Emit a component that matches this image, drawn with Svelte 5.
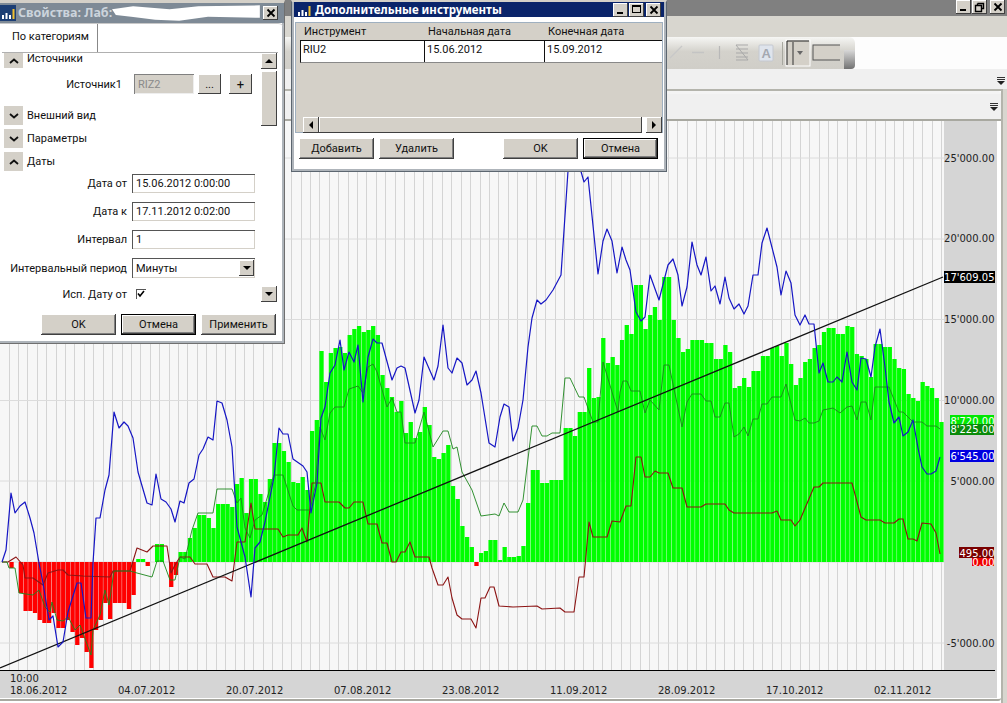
<script>
  const tops = [562,562,568,562,593,611,611,613,620,623,623,613,628,628,620,632,645,638,652,668,630,620,603,619,603,603,603,609,595,559,559,566,562,544,544,562,587,575,
    552,552,538,528,515,515,518,528,504,504,504,507,484,478,513,479,479,494,502,479,443,443,451,462,482,483,
    477,490,431,420,351,382,353,348,347,353,335,329,326,332,330,326,335,375,388,397,412,401,433,422,438,432,407,425,457,459,453,445,486,499,526,537,547,566,553,551,540,540,560,547,557,557,556,546,503,470,470,483,483,480,480,480,428,428,436,412,412,368,398,397,338,363,357,365,340,
    325,334,285,285,329,315,307,320,277,277,320,338,352,349,340,340,340,343,343,359,359,345,352,388,386,378,387,371,371,356,356,348,346,356,343,364,385,378,362,359,348,345,332,328,328,334,334,326,327,354,356,359,377,344,344,347,347,359,368,369,394,398,401,382,386,388,398,422];
  const p = 944 / tops.length;
  const bars = tops.map((y, k) => ({
    x: k * p,
    y: y < 562 ? y : 562,
    h: Math.abs(562 - y),
    fill: y < 562 ? '#00ff00' : '#ff0000'
  })).filter((b) => b.h > 0);
  const vgrid = Array.from({ length: 100 }, (_, i) => Math.round(8.5 + i * 9.42) + 0.5);
  const hgrid = [158, 239, 319.5, 400.5, 481, 562, 643];
  const labels = [["25'000.00",162],["20'000.00",242],["15'000.00",323],["10'000.00",404],["5'000.00",485],["-5'000.00",647]];
  const dates = [['18.06.2012',10],['04.07.2012',118],['20.07.2012',226],['07.08.2012',334],['23.08.2012',442],['11.09.2012',550],['28.09.2012',658],['17.10.2012',766],['02.11.2012',874]];
  const tags = [
    ["8'720.00", 950, 415, 44, 10, '#00e800', 425],
    ["8'225.00", 950, 424, 44, 11, '#0a8a0a', 433],
    ["6'545.00", 950, 450, 44, 12, '#0000e0', 460],
    ['0.00', 972, 556, 22, 10, '#f00000', 566],
    ['495.00', 959, 547, 35, 11, '#7a0000', 557],
    ["17'609.05", 944, 271, 51, 12, '#000000', 281]
  ];
  const blue = "2,562 6,550 11,493 15,513 20,506 25,502 30,518 34,533 39,563 43,583 49,620 53,616 58,647 63,642 68,612 77,583 81,583 86,618 91,618 93,563 96,518 100,518 105,490 109,475 114,412 119,428 124,422 128,426 133,438 138,472 147,503 152,505 156,474 161,499 166,502 171,509 175,522 180,501 184,503 189,483 194,479 199,455 203,449 208,437 213,440 217,401 222,403 227,420 232,447 237,527 245,557 251,597 255,548 260,542 265,522 274,477 279,428 283,434 288,434 293,459 303,466 307,472 311,513 317,483 321,418 325,407 330,373 335,365 340,340 344,370 349,352 354,362 358,345 363,402 368,357 373,339 377,343 382,343 392,380 397,368 401,366 405,368 415,413 419,400 424,357 434,380 438,366 443,325 448,368 452,373 457,358 462,363 467,385 472,380 476,371 481,393 489,443 495,447 500,417 504,404 509,407 513,441 518,428 523,400 528,347 532,318 537,300 541,304 546,300 553,290 561,275 568,171 580,168 584,182 588,177 598,274 603,241 607,229 612,241 617,273 622,247 626,260 630,270 636,312 641,321 645,317 650,275 659,300 668,265 673,259 678,275 682,306 687,287 692,242 697,265 701,275 706,257 711,291 715,286 720,304 725,277 729,298 734,309 739,304 744,314 748,306 753,275 758,275 762,243 767,228 777,267 781,295 786,271 791,283 795,315 800,325 805,315 809,324 814,324 819,373 823,363 828,382 833,382 837,377 842,382 847,352 852,382 857,390 861,358 866,359 871,377 875,347 880,329 885,367 889,402 894,423 899,417 903,436 908,432 913,420 918,448 922,467 927,474 931,474 936,471 940,457";
  const green = "2,562 7,562 9,568 15,568 19,593 33,595 39,590 45,607 50,612 52,602 57,620 63,621 68,617 75,630 80,625 91,655 93,630 100,615 105,590 109,605 114,571 130,571 137,573 152,577 157,561 163,561 170,580 175,580 180,557 185,559 192,530 198,513 213,513 217,489 232,489 237,503 241,498 245,528 250,538 255,520 262,515 274,475 283,475 293,506 297,510 310,510 315,487 320,427 325,440 330,413 335,407 344,407 349,389 358,386 363,393 368,367 373,364 377,372 387,407 392,398 397,412 401,412 405,443 415,443 424,412 433,447 443,431 448,431 453,449 457,447 462,472 472,490 481,516 495,514 499,516 504,503 509,512 518,512 523,500 532,426 537,426 542,436 547,436 552,433 560,433 565,378 570,378 579,397 584,397 593,422 598,422 603,362 618,412 620,392 623,381 627,381 631,391 640,391 645,413 650,400 659,410 664,365 669,365 682,427 687,402 692,394 701,394 706,401 711,401 715,417 720,417 725,403 729,403 734,437 739,434 744,427 748,436 753,419 758,419 762,404 767,404 772,397 781,397 786,384 795,420 800,421 805,418 809,423 814,423 819,421 823,410 833,408 840,413 847,407 852,406 857,420 861,402 866,402 871,420 875,387 889,387 899,412 903,412 913,422 922,422 927,426 936,426 940,429";
  const red = "2,562 8,562 16,557 23,565 25,578 33,578 43,585 48,573 58,570 63,570 68,575 83,576 110,577 113,571 130,571 137,548 147,552 153,546 167,546 171,573 175,565 180,557 190,557 195,564 207,564 213,577 225,577 232,581 237,542 245,542 251,503 255,529 278,529 283,537 288,535 298,535 302,528 307,542 312,483 321,483 325,502 339,502 345,508 349,508 354,502 363,502 368,524 377,524 382,543 387,543 392,562 396,562 401,552 405,552 410,542 415,557 429,557 432,568 438,585 443,585 448,577 452,598 457,615 462,619 471,619 476,628 481,598 485,598 490,587 494,587 499,606 513,607 537,606 542,609 560,608 565,612 574,612 579,577 584,577 589,522 593,537 607,537 612,521 620,522 626,506 631,506 636,457 641,457 645,477 650,477 655,471 659,473 668,473 673,488 682,488 687,507 701,507 706,504 725,504 729,510 734,513 772,513 777,511 781,520 791,520 795,526 800,520 814,487 819,487 823,483 852,483 861,517 866,520 880,520 885,523 894,523 899,519 903,519 908,539 913,539 917,541 922,523 931,524 936,533 940,554";
</script>

<div class="app">
  <div class="titlebar">
    <div class="capbtns">
      <span class="capbtn"><i class="min"></i></span>
      <span class="capbtn"><svg width="11" height="11" viewBox="0 0 11 11"><path d="M3.5 1.5h6v5h-2M3.5 1.5v2M1.5 3.5h6v6h-6z" fill="none" stroke="#000" stroke-width="1.4"/></svg></span>
      <span class="capbtn close"><svg width="10" height="10" viewBox="0 0 10 10"><path d="M1.5 1.5l7 7M8.5 1.5l-7 7" stroke="#000" stroke-width="1.8"/></svg></span>
    </div>
  </div>
  <div class="menubar"></div>
  <div class="toolbar">
    <div class="tools">
      <svg class="tool-icons" width="180" height="32" viewBox="0 0 180 32">
        <path d="M10 21L22 9" stroke="#c8c8c8" stroke-width="1.2"/>
        <path d="M32 15.5H44" stroke="#c4c4c4" stroke-width="1.4"/>
        <path d="M59.5 9V22" stroke="#b8b8b8" stroke-width="1.2"/>
        <path d="M76 8H88M76 12H88M76 16H88M76 20H88M76 23H88M76 8L88 23" stroke="#a9a9a9" stroke-width="1"/>
        <rect x="99" y="8" width="14" height="16" rx="1" fill="#dfe4ec" stroke="#c4c8d0"/>
        <text x="101.5" y="21" class="icon-a">A</text>
        <path d="M122.5 5V28" stroke="#a8a8a0"/>
        <rect x="126" y="3" width="24" height="26" fill="#d4d0c8" stroke="#fff"/>
        <path d="M127 4h22M127 4v24" stroke="#222"/>
        <path d="M133 5v23" stroke="#333"/>
        <path d="M137 14h6l-3 4z" fill="#666"/>
        <rect x="153" y="8" width="28" height="15" fill="#d4d0c8" stroke="#555"/>
      </svg>
      <span class="launcher"></span>
    </div>
  </div>
  <div class="strip one"><span class="chev"></span></div>
  <div class="inner">
    <div class="strip two"><span class="chev"></span></div>
    <div class="frame">
      <svg class="chart" width="997" height="577" viewBox="0 121 997 577">
        <rect x="0" y="121" width="944" height="550" fill="#f7f7f7"/>
        <rect x="944" y="121" width="53" height="577" fill="#d5d5d5"/>
        <rect x="0" y="671" width="997" height="27" fill="#d5d5d5"/>
        {#each vgrid as x}
          <line x1={x} x2={x} y1="121" y2="670" class="vg"/>
        {/each}
        {#each hgrid as y}
          <line x1="0" x2="944" y1={y} y2={y} class="hg"/>
        {/each}
        {#each bars as b}
          <rect x={b.x} y={b.y} width={p - 0.4} height={b.h} fill={b.fill}/>
        {/each}
        <polyline points={red} class="ln redl"/>
        <polyline points={green} class="ln greenl"/>
        <line x1="0" y1="668" x2="943" y2="277" class="trend"/>
        <polyline points={blue} class="ln bluel"/>
        <line x1="0" x2="995" y1="670.5" y2="670.5" stroke="#000"/>
        {#each labels as l}
          <text x="994.5" y={l[1]} text-anchor="end" class="ax">{l[0]}</text>
        {/each}
        {#each tags as t}
          <rect x={t[1]} y={t[2]} width={t[3]} height={t[4]} fill={t[5]}/>
          <text x="994.5" y={t[6]} text-anchor="end" class="tag">{t[0]}</text>
        {/each}
        <text x="10" y="682" class="ax">10:00</text>
        {#each dates as d}
          <text x={d[1]} y="693.5" class="ax">{d[0]}</text>
        {/each}
      </svg>
    </div>
  </div>

  <section class="dlg props">
    <header class="cap inactive">
      <svg class="appicon" width="16" height="16" viewBox="0 0 16 16"><rect width="16" height="16" fill="#1d3f74"/><path d="M2 10h2v4H2zM5.5 8h2v6h-2zM9 10h2v4H9z" fill="#fff"/><path d="M12.5 4h2v10h-2z" fill="#f0c030"/></svg>
      <span class="captext">Свойства: Лаб:</span>
      <svg class="blob" width="152" height="18" viewBox="0 0 154 18"><path d="M0 5L22 2 60 5 90 2 154 1 154 14 100 13 70 17 45 16 20 13 4 11z" fill="#fff"/></svg>
      <span class="capbtn close"><svg width="10" height="10" viewBox="0 0 10 10"><path d="M1.5 1.5l7 7M8.5 1.5l-7 7" stroke="#000" stroke-width="1.8"/></svg></span>
    </header>
    <div class="tabs"><span class="tab">По категориям</span></div>
    <div class="panel">
      <div class="plist">
        <div class="sec first"><span class="tog"><svg width="10" height="6" viewBox="0 0 10 6"><path d="M1 5l4-3.5L9 5" fill="none" stroke="#111" stroke-width="1.8"/></svg></span>Источники</div>
        <div class="row src">
          <label>Источник1</label>
          <span class="field dis">RIZ2</span>
          <span class="mini">...</span>
          <span class="mini plus">+</span>
        </div>
        <div class="sec s1"><span class="tog"><svg width="10" height="6" viewBox="0 0 10 6"><path d="M1 1l4 3.5L9 1" fill="none" stroke="#111" stroke-width="1.8"/></svg></span>Внешний вид</div>
        <div class="sec"><span class="tog"><svg width="10" height="6" viewBox="0 0 10 6"><path d="M1 1l4 3.5L9 1" fill="none" stroke="#111" stroke-width="1.8"/></svg></span>Параметры</div>
        <div class="sec"><span class="tog"><svg width="10" height="6" viewBox="0 0 10 6"><path d="M1 5l4-3.5L9 5" fill="none" stroke="#111" stroke-width="1.8"/></svg></span>Даты</div>
        <div class="row r1"><label>Дата от</label><span class="field wide">15.06.2012 0:00:00</span></div>
        <div class="row r2"><label>Дата к</label><span class="field wide">17.11.2012 0:02:00</span></div>
        <div class="row r3"><label>Интервал</label><span class="field wide">1</span></div>
        <div class="row r4"><label>Интервальный период</label><span class="field wide combo">Минуты<span class="drop"><i class="tri"></i></span></span></div>
        <div class="row r5"><label>Исп. Дату от</label><span class="check"><svg width="8" height="8" viewBox="0 0 8 8"><path d="M1 3.5l2 2.5L7 1" fill="none" stroke="#000" stroke-width="1.6"/></svg></span></div>
      </div>
      <div class="vscroll">
        <span class="sbtn"><i class="tri up"></i></span>
        <span class="thumb"></span>
        <span class="track"></span>
        <span class="sbtn"><i class="tri"></i></span>
      </div>
    </div>
    <footer class="foot f1">
      <button class="btn">OK</button>
      <button class="btn def">Отмена</button>
      <button class="btn">Применить</button>
    </footer>
  </section>

  <section class="dlg tools-dlg">
    <header class="cap active">
      <svg class="appicon small" width="16" height="14" viewBox="0 0 16 14"><path d="M2 9h2v4H2zM5.5 7h2v6h-2zM9 9h2v4H9z" fill="#fff"/><path d="M12.5 3h2v10h-2z" fill="#f0c030"/></svg>
      <span class="captext">Дополнительные инструменты</span>
      <span class="capbtn wbtn"><i class="min"></i></span>
      <span class="capbtn wbtn"><i class="max"></i></span>
      <span class="capbtn wbtn close"><svg width="10" height="10" viewBox="0 0 10 10"><path d="M1.5 1.5l7 7M8.5 1.5l-7 7" stroke="#000" stroke-width="1.8"/></svg></span>
    </header>
    <div class="gridpanel">
      <div class="ghead"><span>Инструмент</span><span>Начальная дата</span><span>Конечная дата</span></div>
      <div class="grow"><span>RIU2</span><span>15.06.2012</span><span>15.09.2012</span></div>
      <div class="gspace"></div>
      <div class="hscroll">
        <span class="sbtn"><i class="tri left"></i></span>
        <span class="hthumb"></span>
        <span class="sbtn"><i class="tri right"></i></span>
      </div>
    </div>
    <footer class="foot f2">
      <button class="btn">Добавить</button>
      <button class="btn">Удалить</button>
      <span class="spacer"></span>
      <button class="btn">OK</button>
      <button class="btn def">Отмена</button>
    </footer>
  </section>
</div>

<style>
  :global(body) { margin: 0; background: #fff; }
  .app { position: relative; width: 1007px; height: 703px; overflow: hidden; display: flex; flex-direction: column; background: #d8d6cf; font-family: Roboto, "Noto Sans", sans-serif; font-size: 11px; color: #111; }
  .titlebar { height: 16px; background: #808080; display: flex; justify-content: flex-end; padding-right: 2px; flex: none; }
  .capbtns { display: flex; }
  .capbtn { width: 15px; height: 14px; box-sizing: border-box; background: #d4d0c8; box-shadow: inset -1px -1px #404040, inset 1px 1px #fff; display: flex; align-items: center; justify-content: center; margin-left: 1px; position: relative; flex: none; }
  .capbtn.close { margin-left: 3px; }
  .min { position: absolute; left: 4px; bottom: 3px; width: 6px; height: 2px; background: #000; }
  .max { position: absolute; left: 3px; top: 2px; width: 9px; height: 8px; box-sizing: border-box; border: 1px solid #000; border-top-width: 2px; }
  .menubar { height: 21px; flex: none; background: #d8d6cf; }
  .toolbar { height: 32px; flex: none; background: #fdfdfd; display: flex; }
  .tools { width: 855px; flex: none; background: linear-gradient(#f6f6f4, #d4d2cc 45%, #d0cec8); border-radius: 0 6px 6px 0; position: relative; display: flex; justify-content: flex-end; }
  .tool-icons { margin-right: 15px; }
  .icon-a { font: 700 13px "Liberation Sans", sans-serif; fill: #a4a8b0; }
  .launcher { position: absolute; right: 0; bottom: 0; width: 11px; height: 19px; background: linear-gradient(#d8d8d8, #727272); border-radius: 0 0 4px 0; }
  .strip { background: #f0f0f0; display: flex; justify-content: flex-end; align-items: center; flex: none; }
  .strip.one { height: 20px; padding: 3px 2px 0 0; box-sizing: border-box; }
  .strip.two { height: 28px; padding-right: 3px; border-top: 3px solid #f4f4f4; box-sizing: border-box; border-radius: 3px 3px 0 0; }
  .chev { width: 8px; height: 8px; background: linear-gradient(#333 1px, transparent 1px, transparent 2px, #333 2px, #333 3px, transparent 3px); position: relative; }
  .chev::after { content: ""; position: absolute; left: 0; top: 4px; border: 4px solid transparent; border-top: 4px solid #222; border-bottom: 0; }
  .inner { flex: 1; min-height: 0; background: #fff; border-top: 2px solid #b4b4ac; border-right: 2px solid #b4b4ac; margin-right: 4px; display: flex; flex-direction: column; box-sizing: border-box; }
  .frame { flex: 1; min-height: 0; border-top: 2px solid #a8a8a0; border-bottom: 2px solid #a8a8a0; border-radius: 0 0 3px 0; margin-bottom: 2px; overflow: hidden; }
  .chart { display: block; }
  .vg { stroke: #d4d4d4; stroke-width: 1; }
  .hg { stroke: #dcdcdc; stroke-width: 1; }
  .ln { fill: none; stroke-width: 1.2; stroke-linejoin: round; }
  .bluel { stroke: #1616c4; stroke-width: 1.2; }
  .greenl { stroke: #1c861c; stroke-width: 0.9; }
  .redl { stroke: #8c1414; stroke-width: 1.1; }
  .trend { stroke: #111; stroke-width: 1.3; }
  .ax { font: 10px "DejaVu Sans", sans-serif; fill: #222; }
  .tag { font: 10px "DejaVu Sans", sans-serif; fill: #fff; }

  .dlg { position: absolute; top: 0; box-sizing: border-box; background: #fff; display: flex; flex-direction: column; }
  .props { left: -1px; width: 286px; height: 344px; border: 1px solid #6f6f6f; border-left: 0; border-top: 3px solid #d4d0c8; box-shadow: inset -2px -2px #aeb4ba; }
  .tools-dlg { left: 291px; width: 376px; height: 172px; border: 1px solid #5c6670; border-top: 2px solid #d4d0c8; box-shadow: inset 0 -2px #aeb4ba, inset -2px 0 #aeb4ba, inset 2px 0 #aeb4ba; }
  .cap { display: flex; align-items: center; flex: none; font-family: "Noto Sans", sans-serif; }
  .cap.inactive { height: 20px; background: #7e8a96; padding-right: 6px; }
  .cap.active { height: 15px; background: #0a246a; margin: 0 2px; padding-right: 3px; }
  .appicon { flex: none; margin-left: 1px; }
  .appicon.small { margin-left: 2px; }
  .captext { font-weight: 700; font-size: 11.5px; line-height: 1; white-space: nowrap; margin-left: 2px; }
  .inactive .captext { color: #ccd4dc; font-size: 12.5px; }
  .active .captext { color: #fff; flex: 1; margin-left: 3px; }
  .blob { margin-right: auto; }
  .wbtn { margin-left: 1px; }
  .wbtn.close { margin-left: 2px; }

  .tabs { height: 28px; flex: none; display: flex; border-top: 1px solid #c8c8c8; border-radius: 0 6px 0 0; }
  .tab { width: 99px; box-sizing: border-box; padding: 6px 0 0 13px; border-right: 1px solid #888; }
  .panel { flex: none; margin-left: 3px; margin-right: 6px; height: 249px; display: flex; border-top: 1px solid #b0b0b0; }
  .plist { flex: 1; min-width: 0; overflow: hidden; }
  .sec { display: flex; align-items: center; height: 19px; margin-top: 4px; }
  .sec.first { margin-top: 0; height: 15px; line-height: 12px; align-items: flex-start; }
  .sec.first .tog { height: 15px; }
  .sec.s1 { margin-top: 12px; }
  .tog { width: 19px; height: 19px; background: #d4d0c8; margin: 0 4px 0 2px; display: flex; align-items: center; justify-content: center; flex: none; }
  .row { display: flex; align-items: center; }
  .row label { width: 130px; text-align: right; padding-right: 5px; box-sizing: border-box; flex: none; white-space: nowrap; }
  .src { margin-top: 6px; height: 20px; }
  .src label { width: 132px; padding-right: 12px; }
  .field { box-sizing: border-box; background: #fff; box-shadow: inset 1px 1px #555, inset -1px -1px #d4d0c8; padding-left: 4px; display: flex; align-items: center; height: 19px; }
  .field.dis { width: 60px; height: 20px; background: #d4d0c8; color: #8a8a8a; box-shadow: inset 1px 1px #808080, inset -1px -1px #eee; }
  .wide { width: 123px; position: relative; }
  .mini { width: 23px; height: 20px; margin-left: 4px; background: #d4d0c8; box-shadow: inset -1px -1px #404040, inset 1px 1px #fff; display: flex; align-items: center; justify-content: center; }
  .mini.plus { margin-left: 8px; font-size: 13px; }
  .r1 { margin-top: 3px; }
  .r2, .r3 { margin-top: 9px; }
  .r4 { margin-top: 9px; }
  .r5 { margin-top: 9px; height: 14px; }
  .combo { height: 20px; }
  .drop { position: absolute; right: 1px; top: 2px; bottom: 2px; width: 15px; background: #d4d0c8; box-shadow: inset -1px -1px #404040, inset 1px 1px #fff; display: flex; align-items: center; justify-content: center; }
  .tri { width: 0; height: 0; border: 4px solid transparent; border-top: 4px solid #000; border-bottom: 0; }
  .tri.up { border: 4px solid transparent; border-bottom: 4px solid #000; border-top: 0; }
  .tri.left { border: 4px solid transparent; border-right: 4px solid #000; border-left: 0; }
  .tri.right { border: 4px solid transparent; border-left: 4px solid #000; border-right: 0; }
  .check { width: 10px; height: 10px; margin-left: 4px; box-sizing: border-box; box-shadow: inset 1px 1px #555; display: flex; align-items: center; justify-content: center; }
  .vscroll { width: 16px; flex: none; display: flex; flex-direction: column; margin-right: 1px; }
  .sbtn { width: 16px; height: 16px; flex: none; box-sizing: border-box; background: #d4d0c8; box-shadow: inset -1px -1px #404040, inset 1px 1px #fff; display: flex; align-items: center; justify-content: center; }
  .thumb { height: 55px; flex: none; background: #d4d0c8; box-shadow: inset -1px -1px #404040, inset 1px 1px #fff; margin-top: 2px; }
  .track { flex: 1; background: #fff; }
  .foot { flex: none; display: flex; }
  .f1 { margin-top: 12px; padding-left: 42px; gap: 5px; }
  .f2 { padding: 5px 0 0 7px; gap: 5px; }
  .spacer { width: 39px; }
  .btn { height: 21px; width: 75px; padding: 0; margin: 0; border: 0; background: #d4d0c8; box-shadow: inset -1px -1px #404040, inset 1px 1px #fff, inset -2px -2px #808080; font: 11px Roboto, "Noto Sans", sans-serif; color: #111; }
  .btn.def { box-shadow: inset 0 0 0 1px #000, inset -2px -2px #404040, inset 2px 2px #fff, inset -3px -3px #808080; }
  .gridpanel { flex: none; margin: 5px 3px 0; height: 111px; background: #d4d0c8; display: flex; flex-direction: column; box-shadow: inset 0 0 0 1px #9fb0c0; }
  .ghead { height: 17px; flex: none; display: grid; grid-template-columns: 124px 120px 1fr; padding-left: 9px; align-items: center; margin-top: 1px; }
  .grow { margin-left: 5px; margin-right: 1px; height: 23px; flex: none; background: #fff; display: grid; grid-template-columns: 124px 120px 1fr; border-top: 1px solid #111; border-left: 1px solid #111; border-bottom: 1px solid #888; box-sizing: border-box; }
  .grow span { padding-left: 2px; border-right: 1px solid #111; line-height: 17px; }
  .grow span:last-child { border-right: 0; }
  .gspace { flex: 1; }
  .hscroll { height: 16px; flex: none; margin-left: 8px; margin-right: 1px; display: flex; background: #fff; }
  .hthumb { flex: 1; background: #d4d0c8; box-shadow: inset -1px -1px #404040, inset 1px 1px #fff; margin-right: 4px; }
</style>
